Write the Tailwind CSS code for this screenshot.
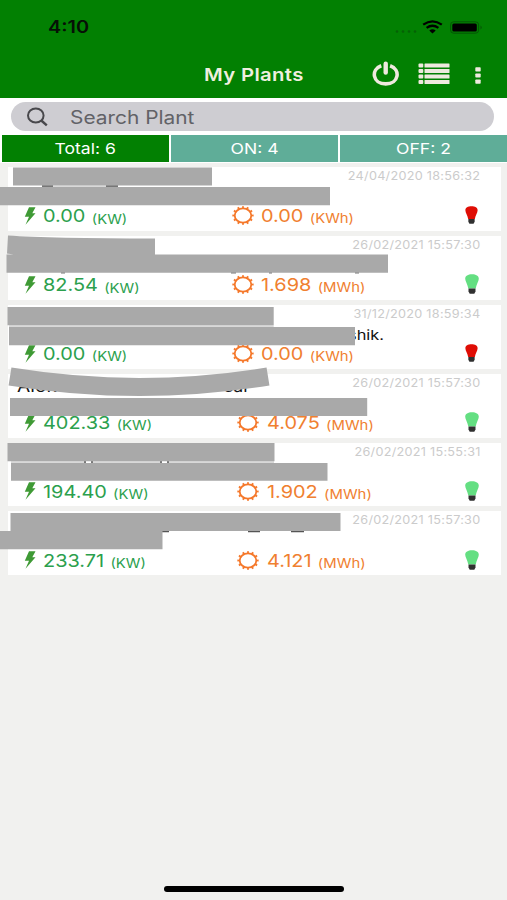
<!DOCTYPE html>
<html lang="en">
<head>
<meta charset="utf-8">
<title>My Plants</title>
<script src="https://cdn.jsdelivr.net/npm/@tailwindcss/browser@4"></script>
</head>
<body class="w-[507px] h-[900px] overflow-hidden bg-[#f1f1ef] font-['Inter','Liberation_Sans',sans-serif]">
<svg class="hidden">
  <symbol id="bolt" viewBox="0 0 12 18"><path d="M5 .3H11.500L8.300 6.200H11.500L1.500 17.700 5 9.700H.8z" fill="#3f9a35"/></symbol>
  <symbol id="sun" viewBox="0 0 22 19"><ellipse cx="11" cy="9.500" rx="8.300" ry="7.100" fill="none" stroke="#f5782a" stroke-width="1.800"/><ellipse cx="11" cy="9.500" rx="9.500" ry="8.200" fill="none" stroke="#f5782a" stroke-width="2.300" pathLength="120" stroke-dasharray="4 6" stroke-dashoffset="2"/></symbol>
  <symbol id="bulb" viewBox="0 0 14 20"><path d="M7 .3C11 .3 13.800 1.800 13.800 4.800 13.800 7.500 11.300 10.500 10.700 14.500H3.300C2.700 10.500 .2 7.500 .2 4.800 .2 1.800 3 .3 7 .3z" fill="currentColor"/><path d="M3.500 14.500h7v3L9.300 19.700H4.700L3.500 17.500z" fill="#303030"/></symbol>
</svg>
<div class="flex flex-col h-full relative">
  <header class="h-[97.5px] bg-[#028002] shrink-0 flex flex-col">
    <div class="h-[52px] flex items-center justify-between pl-[48px] pr-[24px] pt-[2px]">
      <span class="text-[17px] leading-none font-semibold text-[#061006] origin-left scale-x-[1.17]">4:10</span>
      <div class="flex items-center">
        <svg class="w-[24px] h-[14px] mr-[4px] mt-[2px]" viewBox="0 0 24 14"><g fill="#066006"><circle cx="3" cy="10.500" r="1.300"/><circle cx="9" cy="10.500" r="1.300"/><circle cx="15" cy="10.500" r="1.300"/><circle cx="21" cy="10.500" r="1.300"/></g></svg>
        <svg class="w-[21px] h-[14px] mr-[7px]" viewBox="0 0 21 14"><g fill="none" stroke="#000" stroke-width="2.300"><path d="M1.200 4.600Q10.500-2 19.800 4.600"/><path d="M4.600 7.900Q10.500 3.600 16.400 7.900"/></g><path d="M7.300 10.400Q10.500 8 13.700 10.400L10.500 13.500z"/></svg>
        <svg class="w-[33px] h-[13px]" viewBox="0 0 33 13"><rect x=".6" y=".8" width="28" height="11.400" rx="3" fill="none" stroke="#055505"/><rect x="2.300" y="2.500" width="24.500" height="8" rx="1.500"/><path d="M30.500 4.500q2.500 2 0 4z" fill="#055505"/></svg>
      </div>
    </div>
    <div class="h-[45px] flex items-center pl-[204px]">
      <h1 class="w-[168px] text-[17.500px] leading-none font-semibold text-[#efefdf]"><span class="inline-block origin-left scale-x-[1.16] tracking-[0.300px]">My Plants</span></h1>
      <svg class="w-[28px] h-[25px] mb-[2px]" viewBox="0 0 28 25"><path d="M9.300 4.800C-1.500 8.500 .5 22.900 13.700 22.900S29 8.500 18.100 4.800" fill="none" stroke="#efe9df" stroke-width="3.600"/><path d="M13.700 2.700V11.500" stroke="#efe9df" stroke-width="4.400" stroke-linecap="round"/></svg>
      <svg class="w-[32px] h-[22px] ml-[18px] mb-[1px]" viewBox="0 0 32 22"><g fill="#efe9df"><rect x=".5" y=".5" width="4.800" height="4" rx="1"/><rect x="6.500" y=".5" width="25" height="4" rx=".5"/><rect x=".5" y="6" width="4.800" height="4" rx="1"/><rect x="6.500" y="6" width="25" height="4" rx=".5"/><rect x=".5" y="11.500" width="4.800" height="4" rx="1"/><rect x="6.500" y="11.500" width="25" height="4" rx=".5"/><rect x=".5" y="17" width="4.800" height="4" rx="1"/><rect x="6.500" y="17" width="25" height="4" rx=".5"/></g></svg>
      <svg class="w-[6px] h-[17px] ml-[25px] mt-[2px]" viewBox="0 0 6 17"><g fill="#efe9df"><rect x=".3" y=".3" width="5.400" height="4.200" rx=".8"/><rect x=".3" y="6.400" width="5.400" height="4.200" rx=".8"/><rect x=".3" y="12.500" width="5.400" height="4.200" rx=".8"/></g></svg>
    </div>
  </header>
  <div class="bg-white h-[65.500px] shrink-0 pt-[4px]">
    <div class="ml-[11px] w-[483px] h-[29.500px] rounded-full bg-[#cecdd2] flex items-center">
      <svg class="w-[23px] h-[20px] ml-[15px] mt-[1px]" viewBox="0 0 23 20"><ellipse cx="9.800" cy="8.500" rx="7.800" ry="6.900" fill="none" stroke="#48484c" stroke-width="2"/><path d="M15.300 13.500L20.800 18.300" stroke="#48484c" stroke-width="2.400"/></svg>
      <span class="ml-[21px] mt-[4px] text-[18px] leading-none text-[#626267] origin-left scale-x-[1.16]">Search Plant</span>
    </div>
    <nav class="mt-[4px] ml-[2px] flex gap-[1.500px] h-[26.500px] text-white text-[15px] leading-none">
      <div class="flex-1 bg-[#028002] flex items-center justify-center"><span class="scale-x-[1.17]">Total: 6</span></div>
      <div class="flex-1 bg-[#5fad98] flex items-center justify-center"><span class="scale-x-[1.17]">ON: 4</span></div>
      <div class="flex-1 bg-[#5fad98] flex items-center justify-center"><span class="scale-x-[1.17]">OFF: 2</span></div>
    </nav>
  </div>
  <main id="list" class="pt-[4px] pl-[8px] flex flex-col gap-[5px]"></main>

  <svg class="absolute left-0 top-0 w-[507px] h-[900px] pointer-events-none" viewBox="0 0 507 900">
    <g font-family="Inter, sans-serif" fill="#111">
      <text x="348" y="340" font-size="13" textLength="36" lengthAdjust="spacingAndGlyphs">shik.</text>
      <text x="17" y="392" font-size="16" textLength="40" lengthAdjust="spacingAndGlyphs">Alok</text>
      <text x="224" y="392" font-size="16" textLength="26" lengthAdjust="spacingAndGlyphs">sar</text>
    </g>
    <g fill="#777"><path d="M42 185h11v2.500h-11zM106 185h12v2.500h-12zM61 272h4v1.500h-4zM231 272h5v1.500h-5zM269 272h3v1.500h-3zM355 272h4v1.500h-4zM84 461h2v2h-2zM91 461h2v2h-2zM160 461h2v2h-2zM167 461h2v2h-2z"/><path fill="#555" d="M162 530h7v2.300h-7zM248 530h12v2.300h-12zM291 530h13v2.300h-13z"/></g>
    <path fill="#d8d8d8" d="M53 185.500h53v1.500H53zM7.500 253.500h9v1h-9zM9 325.300h264.700v1.700H9zM11 461.300h73v1.700h-73zM93 461.300h67v1.700H93zM169 461.300h105v1.700H169z"/>
    <g fill="#a9a9a9">
      <path d="M13 167.500h199v18H13zM0 187h330v18.200H0z"/>
      <path d="M8 235.500Q50 238.300 155 238.500V255H17L7 253.500zM6.500 254.500h381.500v18.200H6.500z"/>
      <path d="M7.500 307h266.200v18.300H7.500zM9 327h346v18.200H9z"/>
      <path d="M10 398h357.200v18H10z"/>
      <path d="M7.500 443h267v18.300h-267zM11 463h316.500v17.700H11z"/>
      <path d="M10.500 513h330v18h-330zM0 531h162.500v18.300H0z"/>
    </g>
    <path d="M10 376.500Q140 397.500 268 376.500" fill="none" stroke="#a9a9a9" stroke-width="18"/>
  </svg>
  <div class="absolute left-[164px] top-[886px] w-[180px] h-[5.500px] rounded-full bg-black"></div>
</div>
<script>
const plants = [
  ["24/04/2020 18:56:32", "0.00", "0.00", "KWh", 0],
  ["26/02/2021 15:57:30", "82.54", "1.698", "MWh", 1],
  ["31/12/2020 18:59:34", "0.00", "0.00", "KWh", 0],
  ["26/02/2021 15:57:30", "402.33", "4.075", "MWh", 1],
  ["26/02/2021 15:55:31", "194.40", "1.902", "MWh", 1],
  ["26/02/2021 15:57:30", "233.71", "4.121", "MWh", 1]
];
document.getElementById("list").innerHTML = plants.map(([date, kw, total, unit, on], i) => `
  <article class="w-[493px] h-[63.900px] bg-white flex flex-col justify-between shrink-0">
    <div class="flex justify-end pr-[20.500px] pt-[3px]"><time class="text-[11.300px] leading-[13px] text-[#cbcbcb] tracking-[0.250px] origin-right scale-x-[1.12]">${date}</time></div>
    <div class="h-[24px] mb-[2px] flex items-center">
      <svg class="w-[12px] h-[18px] ml-[15.500px] mb-[2px]"><use href="#bolt"/></svg>
      <div class="ml-[7px] mb-[1px] basis-[181px] shrink-0">
        <div class="inline-flex items-baseline gap-[5.500px] text-[#2ba04d] leading-none origin-left scale-x-[1.145] whitespace-nowrap"><span class="text-[17.400px]">${kw}</span><span class="text-[13px] relative top-[1.300px]">(KW)</span></div>
      </div>
      <div class="flex items-center w-[240px] ${i > 2 ? "pl-[13.500px]" : "pl-[8px]"}">
        <svg class="w-[22px] h-[19px] mb-[2px] mr-[7.500px]"><use href="#sun"/></svg>
        <div class="inline-flex items-baseline gap-[5.500px] mb-[2px] text-[#f08030] leading-none origin-left scale-x-[1.145] whitespace-nowrap"><span class="text-[17.400px]">${total}</span><span class="text-[13px] relative top-[1.300px]">(${unit})</span></div>
      </div>
      <svg class="${on ? "w-[14px] h-[20px] text-[#64df82]" : "w-[13px] h-[18px] text-[#df0d05]"} ml-[1.500px] mb-[3px]"><use href="#bulb"/></svg>
    </div>
  </article>`).join("");
</script>
</body>
</html>
